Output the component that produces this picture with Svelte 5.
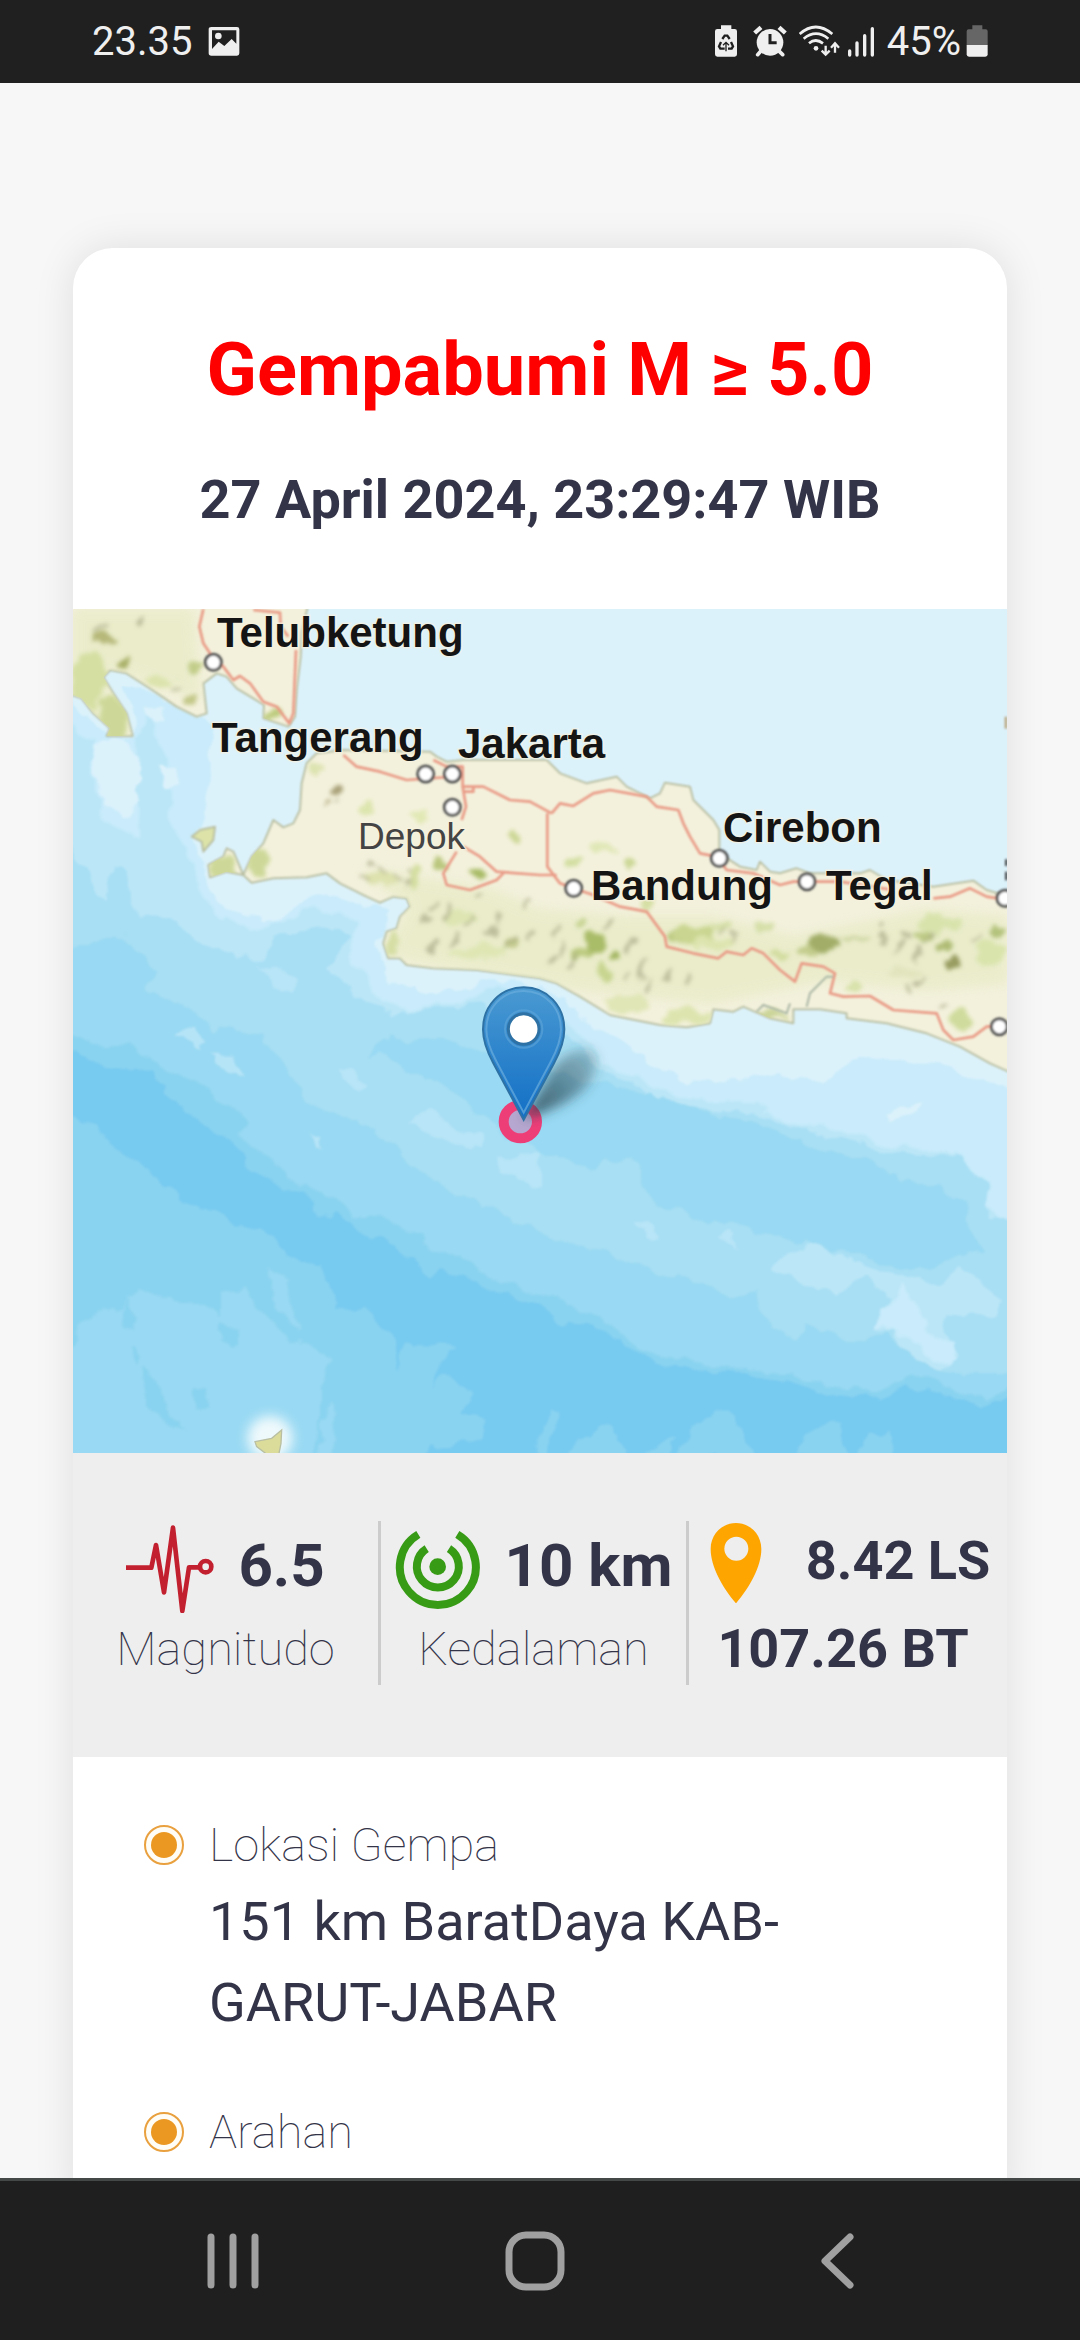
<script>
  const labels = [
    { name: 'Telubketung', x: 144, y: 38 },
    { name: 'Tangerang', x: 139, y: 143 },
    { name: 'Jakarta', x: 385, y: 149 },
    { name: 'Depok', x: 285, y: 240, minor: true },
    { name: 'Cirebon', x: 650, y: 233 },
    { name: 'Bandung', x: 518, y: 291 },
    { name: 'Tegal', x: 753, y: 291 }
  ];

  const cities = [
    [460, 217], [1097, 552], [1177, 552], [1177, 652], [1978, 805],
    [1541, 895], [2241, 875], [2835, 925], [2818, 1310]
  ];

  // Hill shading: x, y, rx, ry, colour
  const hills = [
    [130, 145, 34, 18, '#b5b878'], [190, 212, 18, 12, '#a9b068'], [400, 240, 26, 16, '#c3cd8a'],
    [395, 330, 20, 18, '#c3c888'], [90, 270, 50, 90, '#d5dfa2'], [300, 270, 50, 14, '#dce3ac'],
    [160, 390, 40, 70, '#cdd898'], [640, 370, 24, 16, '#bccb7c'], [830, 605, 20, 12, '#a8a078'],
    [795, 635, 12, 10, '#bdb690'], [770, 540, 22, 12, '#dde3b0'], [920, 660, 20, 26, '#dde5ae'],
    [1085, 675, 24, 18, '#e1e8b4'], [1135, 820, 24, 18, '#b9c67c'], [1255, 845, 24, 18, '#a8bb66'],
    [1070, 860, 18, 46, '#d4dea0'], [1370, 740, 18, 22, '#cdd796'], [960, 870, 46, 22, '#dde2ae'],
    [590, 820, 34, 40, '#cdd898'], [490, 830, 44, 34, '#cdd898'], [1000, 1060, 20, 34, '#d6dea4'],
    [1355, 1062, 16, 22, '#c2c98c'], [1200, 985, 50, 18, '#dee5b2'], [1260, 1085, 90, 18, '#dfe6b4'],
    [1540, 820, 26, 18, '#d2dea0'], [1710, 825, 18, 16, '#cbd794'], [1620, 775, 40, 14, '#e0e7b6'],
    [1600, 1060, 26, 34, '#a9bc68'], [1665, 1095, 16, 20, '#a3b662'], [1560, 1090, 30, 18, '#bccb80'],
    [1850, 1040, 34, 20, '#b7c67c'], [1635, 1150, 18, 36, '#c8d590'], [1560, 1000, 14, 22, '#c8d494'],
    [1900, 1035, 60, 24, '#c9d590'], [1760, 940, 16, 30, '#d5dfa4'], [1990, 1010, 40, 16, '#d6dfa8'],
    [2110, 1010, 30, 16, '#d6dfa8'], [1700, 1240, 70, 26, '#e0e6b6'], [1880, 1280, 80, 24, '#dde4ae'],
    [2285, 1060, 46, 22, '#a2ad68'], [2240, 1085, 34, 16, '#c3cc8c'], [2390, 1045, 50, 10, '#cfd5a2'],
    [2160, 1090, 20, 12, '#d2dc9e'], [2600, 1040, 30, 18, '#bcc984'], [2650, 1070, 20, 16, '#afbc74'],
    [2680, 1115, 18, 18, '#989c60'], [2640, 1000, 70, 26, '#d8e3ac'], [2810, 1020, 18, 18, '#b3c27c'],
    [2790, 1090, 40, 34, '#d9e4ac'], [2700, 1290, 30, 36, '#cfdb9c'], [2380, 1190, 26, 14, '#d8e2aa'],
    [2530, 1150, 46, 14, '#e2e4be'], [2140, 1275, 46, 12, '#cbd498'], [1960, 1060, 70, 14, '#dde4ae']
  ];

  // Fine relief strokes scattered along the mountain ridges
  const ridges = [
    'M1110 960l20-34M1150 990l26-40M1080 1010l20-30M1220 1010l16-34M1290 1040l24-36M1340 1080l26-40M1400 1050l20-36M1390 950l12-22M1180 1060l24-30M1310 990l10-24M1100 1080l30-20M1240 930l24-20',
    'M1480 1040l14-40M1500 1100l18-40M1530 1130l16-40M1470 1130l14-30M1640 1020l14-30M1700 1090l20-40M1740 1160l12-50M1760 1210l10-50M1820 1180l10-40M1880 1190l4-40M1690 1180l20-30',
    'M2460 1060l20-26M2500 1090l26-34M2560 1110l20-40M2590 1060l36-34M2520 1040l40-8M2570 1190l24-26M2540 1210l12-26M2470 1010l6-20M2740 1060l20-26M2640 1260l14-26M1980 1040l22-20M2020 1060l14-30',
    'M900 860l30 24M950 830l20 26M1000 850l16 30M1040 820l10 30M1030 890l26-10M930 810l20 10M830 640l20-10M240 100l10-30M110 120l30-16M340 290l20 14'
  ];

  const locations = [
    { title: 'Lokasi Gempa', text: '151 km BaratDaya KAB-GARUT-JABAR' },
    { title: 'Arahan', text: '' }
  ];
</script>

<div class="screen">
  <header class="status">
    <div class="status-group">
      <span>23.35</span>
      <svg class="photo" width="32" height="32" viewBox="445 78 96 96" aria-hidden="true">
        <path fill="#efefef" fill-rule="evenodd" d="M455 81h77q7 0 7 7v72q0 7-7 7h-77q-8 0-8-7V88q0-7 8-7ZM457 91v56l20-22 17 13 22-21 14 14V91Z" />
        <circle cx="476" cy="108" r="10" fill="#efefef" />
      </svg>
    </div>
    <div class="status-group right">
      <svg width="26" height="35" viewBox="69 72 78 105" aria-hidden="true">
        <path fill="#efefef" d="M90 76h31v11h10q7 0 7 7v69q0 7-7 7H79q-7 0-7-7V94q0-7 7-7h11Z" />
        <g fill="none" stroke="#202020" stroke-width="7">
          <path d="M94 117l7-10h8l7 10M90 126l-6 13 4 7h13M120 126l6 13-4 7h-11" />
          <path d="M105 154v-26m-9 8l9-9 9 9" stroke-width="4" />
        </g>
      </svg>
      <svg width="38" height="35" viewBox="177 72 114 105" aria-hidden="true">
        <circle cx="237" cy="127" r="40" fill="#efefef" />
        <path d="M191 99l19-17M283 99l-19-17" stroke="#efefef" stroke-width="13" fill="none" />
        <path d="M209 154l-9 10M265 154l10 10" stroke="#efefef" stroke-width="11" stroke-linecap="round" fill="none" />
        <path d="M237 102v26h20" stroke="#202020" stroke-width="9" fill="none" />
      </svg>
      <svg class="wifi" width="40" height="35" viewBox="321 72 120 105" aria-hidden="true">
        <g fill="none" stroke="#efefef" stroke-width="8">
          <path d="M326 102q48-42 98 0M338 116q37-30 74 0M354 130q20-17 42 0" />
          <path d="M404 137v26m-12-11l12 12 12-12M432 158v-26m-12 11l12-13 12 13" stroke-width="7" />
        </g>
        <circle cx="375" cy="145" r="7" fill="#efefef" />
      </svg>
      <svg width="29" height="35" viewBox="471 72 87 105" aria-hidden="true">
        <path d="M476 153v12M498 129v36M521 107v58M544 86v79" stroke="#efefef" stroke-width="10" stroke-linecap="round" />
      </svg>
      <span class="battery">
        <span>45%</span>
        <svg width="22" height="35" viewBox="829 72 66 105" aria-hidden="true">
          <path fill="#666" d="M848 76h30v12h10q6 0 6 6v42h-63V94q0-6 6-6h11Z" />
          <path fill="#efefef" d="M831 135h63v28q0 7-7 7h-49q-7 0-7-7Z" />
        </svg>
      </span>
    </div>
  </header>

  <main class="page">
    <article class="card">
      <div class="heading">
        <h1>Gempabumi M ≥ 5.0</h1>
        <p>27 April 2024, 23:29:47 WIB</p>
      </div>

      <svg class="map" viewBox="0 0 934 844" role="img" aria-label="Peta lokasi gempa">
        <defs>
          <filter id="organic" x="0" y="0" width="100%" height="100%">
            <feTurbulence type="fractalNoise" baseFrequency="0.04" numOctaves="3" seed="7" result="n" />
            <feDisplacementMap in="SourceGraphic" in2="n" scale="18" xChannelSelector="R" yChannelSelector="G" />
            <feGaussianBlur stdDeviation="1" />
          </filter>
          <filter id="soft" x="-5%" y="-5%" width="110%" height="110%"><feGaussianBlur stdDeviation="1" /></filter>
          <filter id="relief" x="-5%" y="-5%" width="110%" height="110%">
            <feTurbulence type="fractalNoise" baseFrequency="0.02" numOctaves="3" seed="3" result="n" />
            <feDisplacementMap in="SourceGraphic" in2="n" scale="50" xChannelSelector="R" yChannelSelector="G" />
            <feGaussianBlur stdDeviation="7" />
          </filter>
          <filter id="shade" x="-50%" y="-50%" width="200%" height="200%"><feGaussianBlur stdDeviation="18" /></filter>
          <linearGradient id="pin" x1="0" y1="0" x2="0" y2="1">
            <stop offset="0" stop-color="#4a9ad2" />
            <stop offset="1" stop-color="#126fc6" />
          </linearGradient>
          <linearGradient id="cast" gradientUnits="userSpaceOnUse" x1="1392" y1="1590" x2="1610" y2="1400">
            <stop offset="0" stop-color="#23414c" stop-opacity=".85" />
            <stop offset="1" stop-color="#23414c" stop-opacity=".25" />
          </linearGradient>
          <clipPath id="land">
            <path d="M39 57H745L725 130 722 200 710 300 705 380 685 410 640 395 610 385 612 345 580 325 530 295 500 260 470 250 430 280 440 370 410 380 350 350 270 295 200 250 150 240 130 262 160 310 200 370 218 438 140 438 150 415 100 370 65 325 39 315Z" />
            <path d="M770 490L850 480 1110 485 1130 500 1160 515 1210 510 1460 510 1500 550 1580 580 1670 560 1700 590 1770 625 1800 610 1815 578 1890 590 1900 630 1960 690 1978 720 1978 790 2040 830 2090 840 2100 815 2130 845 2160 850 2210 835 2250 850 2400 850 2430 840 2480 870 2620 890 2740 872 2780 900 2841 920V1445L2700 1370 2600 1330 2480 1300 2360 1285V1270L2280 1258H2200L2200 1300 2130 1285 2050 1250 2020 1265 1960 1258 1950 1300 1880 1312 1800 1305 1650 1275 1560 1220 1490 1180 1440 1165 1250 1140 1120 1135 1040 1125 1020 1105 985 1105 970 1060 980 1025 1010 1015 1020 980 1050 950 1040 925 1000 920 960 938 920 920 840 880 800 850 740 862 640 865 575 878 550 855 500 845 450 862 445 825 490 800 500 775 520 785 550 855 575 800 610 760 640 690 670 712 700 700 720 660 725 580 740 520Z" />
          </clipPath>
        </defs>

        <rect width="934" height="844" fill="#dcf2fb" />

        <g filter="url(#organic)">
          <g transform="translate(-13 -19) scale(.33333)">
            <path fill="#c9ebfb" d="M0 330L90 370 150 440 220 445 225 400 180 290 240 290 420 380 455 420V620L430 700 395 740 420 800 450 890 500 960 640 990 770 910 880 930 980 960 950 1060 980 1160 1040 1200 1220 1200 1300 1170 1440 1180 1560 1270 1700 1380 1790 1430 1880 1470 2040 1480 2140 1450 2290 1480 2340 1430 2400 1400 2560 1420 2700 1440 2880 1510V2640H0Z" />
            <path fill="#bbe6f7" d="M0 370L90 460 110 600 130 690 230 740 240 600 230 450 260 380 320 500 330 680 380 780 420 900 480 990 580 1020 740 960 900 980 870 1100 960 1230 1050 1260 1220 1230 1320 1190 1500 1260 1600 1390 1680 1450 1800 1500 1960 1530 2130 1560 2200 1600 2300 1620 2500 1660 2680 1690 2760 1760 2800 1890 2880 1880V2640H0Z" />
            <path fill="#a8dff4" d="M0 740L130 930 150 840 200 850 230 980 340 1000 420 1060 520 1100 620 1100 640 1040 800 1010 880 1040 810 1130 900 1220 1000 1270 1250 1240 1500 1320 1600 1420 1760 1510 1960 1560 2130 1570 2200 1610 2300 1640 2440 1670 2560 1690 2700 1700 2790 1790 2780 1880 2880 1890V2640H0Z" />
            <path fill="#99d9f3" d="M0 1090L120 1060 180 1030 230 1080 300 1150 250 1190 400 1260 460 1310 600 1340 680 1420 740 1530 800 1570 960 1630 1040 1700 1120 1780 1300 1850 1440 1930 1560 1970 1760 2040 1860 2060 2020 2120 2080 2110 2130 2220 2220 2240 2230 2200 2380 2260 2480 2230 2560 2300 2660 2350 2880 2350V2640H0Z" />
            <path fill="#99d9f3" d="M920 1400L1000 1340 1180 1360 1300 1400 1440 1430 1700 1500 1850 1530 1960 1570 2110 1590 2180 1640 2280 1680 2440 1710 2530 1780 2640 1790 2720 1840 2710 1900 2780 1980 2700 2000 2560 2040 2440 2010 2280 1970 2150 1940 1960 1890 1870 1870 1770 1830 1720 1720 1650 1700 1600 1730 1500 1710 1440 1690 1300 1620 1200 1520 1050 1450 980 1400Z" />
            <path fill="#8ad3f0" d="M0 1320L80 1360 220 1370 300 1430 400 1460 500 1540 570 1600 540 1640 640 1710 720 1790 860 1850 880 1880 960 1890 1090 1930 1100 1980 1200 2000 1320 2080 1440 2110 1600 2170 1740 2270 1860 2310 2040 2335 2200 2350 2320 2390 2440 2410 2560 2350 2660 2390 2780 2420 2880 2390V2640H0Z" />
            <path fill="#78cbf0" d="M0 1360L70 1410 170 1430 280 1450 330 1520 430 1590 500 1650 620 1770 720 1810 800 1870 900 1920 1000 1980 1070 2020 1110 2060 1140 2030 1240 2070 1320 2110 1440 2140 1500 2200 1600 2200 1720 2280 1840 2330 2040 2350 2180 2370 2320 2420 2460 2430 2540 2380 2640 2410 2760 2440 2880 2420V2640H1060L1110 2570 1240 2550 1280 2490 1200 2480 1230 2400 1160 2340 1100 2390 1180 2270 1040 2260 1000 2350 1010 2260 960 2220 920 2150 820 2170 800 2060 780 2020 720 2020 640 1950 600 1910 540 1920 500 1880 380 1840 300 1770 220 1720 150 1650 90 1610 0 1560Z" />
            <path fill="#99d9f3" d="M0 2330L60 2220 120 2150 190 2160 220 2100 320 2130 400 2130 480 2180 480 2100 550 2090 580 2160 700 2250 760 2260 820 2310 780 2400 780 2500 760 2640H0Z" />
            <path fill="#99d9f3" d="M630 2040L680 2070 715 2220 650 2150ZM790 2480L830 2440 810 2600 780 2600Z" />
            <path fill="#8ad3f0" d="M200 2140L240 2180 220 2230 190 2210ZM490 2200L540 2210 520 2260 480 2250ZM240 2340L300 2380 310 2460 380 2530 330 2510 260 2450ZM390 2410L440 2390 460 2440 410 2460ZM210 2270L240 2300 220 2330Z" />
            <path fill="#8ad3f0" d="M1860 2589L1900 2520 1960 2460 2020 2470 2050 2540 2100 2600H1860ZM2210 2600L2230 2520 2350 2490 2340 2560 2370 2600ZM2400 2600L2430 2530 2490 2520 2490 2600ZM1520 2600L1560 2550 1640 2500 1680 2550 1700 2600ZM1440 2530L1480 2460 1500 2470 1460 2600H1430ZM1750 2600L1850 2540 1830 2600Z" />
            <path fill="#bbe6f7" d="M600 1120L640 1140 710 1170 705 1215 640 1190ZM340 1340L400 1315 440 1350 420 1380ZM450 1400L510 1400 550 1455 500 1450ZM830 1440L880 1440 925 1490 890 1510ZM1040 1600L1110 1550 1180 1600 1260 1640 1260 1690 1150 1650ZM1310 1700L1440 1690 1440 1790 1330 1750ZM740 1640L780 1640 785 1680ZM1720 1900L1760 1890 1810 1945 1780 1950ZM1970 1930L2020 1930 2030 1980Z" opacity=".8" />
            <path fill="#bbe6f7" d="M2130 2030L2250 1960 2400 2020 2540 2060 2640 2080 2700 2030 2790 2080 2840 2140 2780 2180 2660 2170 2650 2220 2700 2310 2640 2340 2560 2310 2500 2230 2430 2220 2490 2120 2420 2060 2380 2080 2320 2120Z" />
            <path fill="#c9ebfb" d="M2430 2210L2530 2080 2570 2130 2600 2230 2680 2260 2690 2320 2620 2310 2540 2240Z" />
            <path fill="#dcf2fb" d="M2470 1570L2580 1530 2570 1570 2490 1590ZM90 470L200 450 240 520 240 640 200 680 130 650ZM300 540L350 540 360 590 310 590ZM250 350L310 360 300 410 260 390Z" />
          </g>
        </g>

        <g filter="url(#soft)">
          <g transform="translate(-13 -19) scale(.33333)">
            <g fill="#f3f1dc" stroke="#b9bfa2" stroke-width="6" stroke-linejoin="round">
              <path d="M20 40H745L725 130 722 200 710 300 705 380 685 410 640 395 610 385 612 345 580 325 530 295 500 260 470 250 430 280 440 370 410 380 350 350 270 295 200 250 150 240 130 262 160 310 200 370 218 438 140 438 150 415 100 370 65 325 20 310Z" />
              <path d="M770 490L850 480 1110 485 1130 500 1160 515 1210 510 1460 510 1500 550 1580 580 1670 560 1700 590 1770 625 1800 610 1815 578 1890 590 1900 630 1960 690 1978 720 1978 790 2040 830 2090 840 2100 815 2130 845 2160 850 2210 835 2250 850 2400 850 2430 840 2480 870 2620 890 2740 872 2780 900 2880 930V1460L2790 1420 2700 1370 2600 1330 2480 1300 2360 1285V1270L2280 1258H2200L2200 1300 2130 1285 2050 1250 2020 1265 1960 1258 1950 1300 1880 1312 1800 1305 1650 1275 1560 1220 1490 1180 1440 1165 1250 1140 1120 1135 1040 1125 1020 1105 985 1105 970 1060 980 1025 1010 1015 1020 980 1050 950 1040 925 1000 920 960 938 920 920 840 880 800 850 740 862 640 865 575 878 550 855 500 845 450 862 445 825 490 800 500 775 520 785 550 855 575 800 610 760 640 690 670 712 700 700 720 660 725 580 740 520Z" />
              <path fill="#dde3a8" d="M395 740L420 720 465 710 460 750 430 785 425 755Z" />
            </g>
          </g>
        </g>

        <g transform="translate(-13 -19) scale(.33333)">
          <g clip-path="url(#land)">
            <path d="M39 57H400L420 330 200 250 120 240 218 438H140L39 320ZM900 840L1060 860 1300 900 1440 960 1700 980 1960 980 2200 1040 2600 960 2841 980V1180L2600 1200 2300 1170 1950 1240 1560 1200 1040 1110 980 1080 1050 950Z" fill="#e4e9bf" opacity=".6" filter="url(#shade)" />
            <g filter="url(#relief)">
              {#each hills as [x, y, rx, ry, color]}
                <ellipse cx={x} cy={y} {rx} {ry} fill={color} />
              {/each}
              {#each ridges as d}
                <path {d} stroke="#aaa987" stroke-width="12" opacity=".7" fill="none" />
              {/each}
            </g>
          </g>
          <ellipse cx="630" cy="2545" rx="68" ry="68" fill="#eef9fc" filter="url(#shade)" />
          <path fill="#dcdc9a" stroke="#b9bfa2" stroke-width="4" d="M585 2555L635 2545 665 2520 663 2560 655 2600H630L590 2570Z" />
        </g>

        <g filter="url(#soft)">
          <g transform="translate(-13 -19) scale(.33333)">
            <g fill="none" stroke="#e99a85" stroke-width="8" stroke-linejoin="round">
              <path d="M430 57L418 110 430 160 450 190 490 230 520 270 540 258 570 280 610 335 650 350 688 400 700 370 708 180M580 60L660 68 662 110 685 140" />
              <path d="M850 495L890 530 960 545 1040 570 1210 558M1120 510L1160 530H1208V590L1218 650 1205 690M1210 590H1270L1350 630 1410 635 1475 670M1210 605H1240V590" />
              <path d="M1210 770L1260 800 1310 845 1440 855 1490 855M1190 785L1150 850 1160 885 1230 900 1310 870 1330 850" />
              <path d="M1475 670L1500 640 1540 648 1600 610 1650 600 1760 620 1790 650 1855 660 1870 700 1890 740 1920 790 1970 800 2000 840 2080 850 2160 885 2200 875H2340L2500 900M2620 925L2670 920 2730 895 2780 920 2841 930" />
              <path d="M1462 670V830L1500 880 1540 895 1600 915 1680 950 1760 965 1815 1040 1820 1070 1900 1090 1975 1105 2000 1085 2050 1095 2075 1075 2110 1090 2160 1140 2205 1175 2225 1120 2290 1130 2325 1150 2310 1210 2350 1220 2430 1218 2500 1260 2630 1270 2650 1320 2680 1350 2740 1340 2780 1310 2820 1308" />
            </g>
            <path d="M2240 1250L2250 1210 2300 1160 2320 1160M2090 1265L2110 1245 2180 1270 2190 1240" fill="none" stroke="#a9b6a4" stroke-width="6" />
            <path d="M2838 380v36" stroke="#b9a47c" stroke-width="8" />
            <path d="M2839 808v20M2839 845v26" stroke="#333" stroke-width="7" />
            {#each cities as [x, y]}
              <circle cx={x} cy={y} r="24" fill="#fff" stroke="#555" stroke-width="9" />
            {/each}
          </g>
        </g>

        <g class="labels">
          {#each labels as label}
            <text x={label.x} y={label.y} class:minor={label.minor}>{label.name}</text>
          {/each}
        </g>

        <g transform="translate(-13 -19) scale(.33333)">
          <circle cx="1381" cy="1595" r="50" fill="#b5a7cf" stroke="#ee3e78" stroke-width="30" />
          <path d="M1392 1585L1470 1450Q1520 1370 1590 1380 1635 1410 1580 1490 1520 1550 1392 1585Z" fill="url(#cast)" filter="url(#shade)" />
          <path d="M1391 1192C1320 1192 1269 1248 1269 1318 1269 1355 1281 1385 1300 1420L1391 1590 1482 1420C1501 1385 1513 1355 1513 1318 1513 1248 1462 1192 1391 1192Z" fill="url(#pin)" stroke="#2e72a5" stroke-width="6" />
          <path d="M1391 1203C1326 1203 1279 1254 1279 1318 1279 1352 1291 1380 1309 1414L1391 1568 1473 1414C1491 1380 1503 1352 1503 1318 1503 1254 1456 1203 1391 1203Z" fill="none" stroke="#69addd" stroke-width="6" opacity=".7" />
          <circle cx="1391" cy="1317" r="46" fill="#fff" stroke="#2e72a5" stroke-width="9" />
          <circle cx="1391" cy="1317" r="56" fill="none" stroke="#5fa5d8" stroke-width="6" opacity=".6" />
        </g>
      </svg>

      <section class="stats">
        <div class="stat">
          <div class="value">
            <svg width="88" height="88" viewBox="168 140 264 264" aria-hidden="true">
              <path d="M168 268h76l14-68 24 142 27-194 28 250 20-131h30" fill="none" stroke="#c3202f" stroke-width="14" stroke-linejoin="round" />
              <circle cx="407" cy="265" r="17" fill="none" stroke="#c3202f" stroke-width="14" />
            </svg>
            <strong>6.5</strong>
          </div>
          <span class="caption">Magnitudo</span>
        </div>
        <div class="stat">
          <div class="value">
            <svg width="86" height="88" viewBox="970 140 258 264" aria-hidden="true">
              <g fill="none" stroke="#389b16" stroke-width="24">
                <path d="M1040 168A114 114 0 1 0 1157 168" />
                <path d="M1065 211A63 63 0 1 0 1132 211" />
              </g>
              <circle cx="1098" cy="265" r="25" fill="#389b16" />
            </svg>
            <strong>10 km</strong>
          </div>
          <span class="caption">Kedalaman</span>
        </div>
        <div class="stat place">
          <div class="value">
            <svg width="80" height="80" viewBox="466 128 240 240" aria-hidden="true">
              <path fill="#ffa500" fill-rule="evenodd" d="M586 128C544 128 510 162 510 206 510 260 546 322 586 369 626 322 662 260 662 206 662 162 628 128 586 128ZM587 169a36 36 0 1 1 0 72a36 36 0 1 1 0-72Z" />
            </svg>
            <strong>8.42 LS</strong>
          </div>
          <strong class="second">107.26 BT</strong>
        </div>
      </section>

      <ul class="details">
        {#each locations as item}
          <li>
            <svg class="bullet" width="42" height="42" viewBox="0 0 42 42" aria-hidden="true">
              <circle cx="21" cy="21" r="19" fill="#fffdf6" stroke="#e9a03f" stroke-width="2" />
              <circle cx="21" cy="21" r="13" fill="#eb9822" />
            </svg>
            <div>
              <h2>{item.title}</h2>
              {#if item.text}<p>{item.text}</p>{/if}
            </div>
          </li>
        {/each}
      </ul>
    </article>
  </main>

  <nav class="nav">
    <button aria-label="Aplikasi terbaru">
      <svg width="60" height="60" viewBox="0 0 60 60"><path d="M8 6v48M30 6v48M52 6v48" stroke="#a0a0a0" stroke-width="7" stroke-linecap="round" /></svg>
    </button>
    <button aria-label="Beranda">
      <svg width="60" height="60" viewBox="0 0 60 60"><rect x="4" y="4" width="52" height="52" rx="17" fill="none" stroke="#a0a0a0" stroke-width="7" /></svg>
    </button>
    <button aria-label="Kembali">
      <svg width="60" height="60" viewBox="0 0 60 60"><path d="M43 6L18 30 43 54" fill="none" stroke="#a0a0a0" stroke-width="7" stroke-linecap="round" stroke-linejoin="round" /></svg>
    </button>
  </nav>
</div>

<style>
  :global(body) {
    margin: 0;
    background: #f7f7f7;
  }

  .screen {
    display: flex;
    flex-direction: column;
    height: 100vh;
    font-family: Roboto, "Liberation Sans", sans-serif;
    color: #343449;
  }

  svg {
    display: block;
    flex: none;
  }

  h1, h2, p, ul {
    margin: 0;
    padding: 0;
  }

  .status {
    flex: none;
    display: flex;
    justify-content: space-between;
    align-items: center;
    height: 83px;
    padding: 0 92px;
    background: #202020;
    color: #efefef;
    font-size: 40px;
    line-height: 48px;
  }

  .status-group {
    display: flex;
    align-items: center;
    gap: 16px;
  }

  .status-group.right {
    gap: 10px;
  }

  .wifi {
    overflow: visible;
  }

  .battery {
    display: flex;
    align-items: center;
    gap: 5px;
  }

  .page {
    flex: 1;
    min-height: 0;
    overflow: hidden;
    padding: 165px 73px 0;
  }

  .card {
    overflow: hidden;
    background: #fff;
    border-radius: 40px;
    box-shadow: 0 0 40px rgba(0, 0, 0, 0.1);
  }

  .heading {
    padding: 77px 40px 69px;
    text-align: center;
  }

  h1 {
    color: #f00;
    font-size: 74px;
    font-weight: 700;
    line-height: 90px;
  }

  .heading p {
    margin-top: 44px;
    font-size: 54px;
    font-weight: 700;
    line-height: 81px;
  }

  .map {
    width: 100%;
    height: auto;
  }

  .labels text {
    font-family: "Liberation Sans", Arial, sans-serif;
    font-size: 42px;
    font-weight: 700;
    fill: #141414;
    stroke: #f6f1de;
    stroke-width: 3px;
    stroke-opacity: 0.7;
    paint-order: stroke;
  }

  .labels .minor {
    font-size: 37px;
    font-weight: 400;
    fill: #444;
  }

  .stats {
    display: grid;
    grid-template-columns: repeat(3, 1fr);
    padding: 68px 10px 72px 0;
    background: #eee;
  }

  .stat {
    display: flex;
    flex-direction: column;
    align-items: center;
    height: 164px;
    border-right: 3px solid #ccc;
    white-space: nowrap;
  }

  .stat:last-child {
    border-right: 0;
  }

  .value {
    display: flex;
    align-items: center;
    gap: 24px;
    height: 92px;
    font-size: 60px;
    line-height: 72px;
  }

  .value svg {
    margin-top: 4px;
  }

  .value strong {
    margin-bottom: 2px;
  }

  .caption {
    font-size: 47px;
    font-weight: 100;
    line-height: 72px;
  }

  .place .value {
    gap: 30px;
    height: 84px;
    font-size: 54px;
    line-height: 81px;
  }

  .place .value svg {
    margin-top: 0;
  }

  .place .value strong {
    margin-bottom: 6px;
  }

  .second {
    margin-top: 3px;
    font-size: 54px;
    line-height: 81px;
  }

  .details {
    display: flex;
    flex-direction: column;
    gap: 53px;
    padding: 52px 70px 53px;
    list-style: none;
  }

  li {
    display: flex;
    gap: 24px;
  }

  .bullet {
    margin-top: 15px;
  }

  h2 {
    font-size: 47px;
    font-weight: 100;
    line-height: 72px;
  }

  li p {
    max-width: 640px;
    font-size: 54px;
    line-height: 81px;
  }

  .nav {
    flex: none;
    display: flex;
    justify-content: center;
    box-sizing: border-box;
    height: 162px;
    padding-right: 11px;
    border-top: 3px solid #444846;
    background: #1f1f1f;
  }

  button {
    display: flex;
    align-items: center;
    justify-content: center;
    width: 302px;
    padding: 0;
    border: 0;
    background: none;
    cursor: pointer;
  }
</style>
